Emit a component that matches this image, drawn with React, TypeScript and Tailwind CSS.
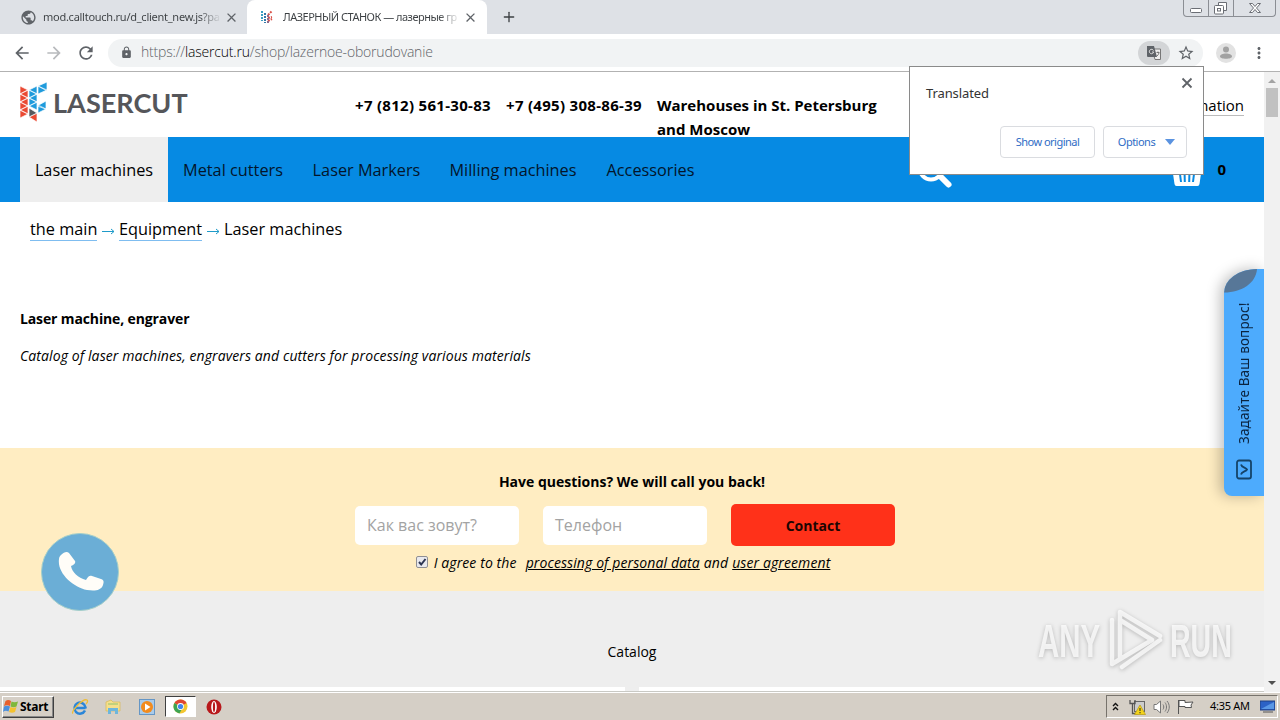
import React from 'react';
import clsx from 'clsx';
import { Plus } from 'lucide-react';
import { MdArrowBack, MdArrowForward, MdClose, MdLock, MdMoreVert, MdPublic, MdRefresh, MdStarBorder } from 'react-icons/md';

const uiFont = "font-['Noto_Sans','Open_Sans',sans-serif]";

const navItems = [
  { label: 'Laser machines', width: 'w-[148px]', active: true },
  { label: 'Metal cutters', width: 'w-[130px]' },
  { label: 'Laser Markers', width: 'w-[137px]' },
  { label: 'Milling machines', width: 'w-[156px]' },
  { label: 'Accessories', width: 'w-[119px]' },
];

function Favicon() {
  return (
    <svg width="14" height="16" viewBox="0 0 14 16" fill="none" strokeWidth="2" strokeDasharray="2 1">
      <path d="M2 2v10" stroke="#3c9fc4" />
      <path d="M5 4v10" stroke="#3579a8" />
      <path d="M8 6l4-4M8 9l4-1M8 12l4-2" stroke="#d9534a" />
      <path d="M8 6v9" stroke="#8c6b8e" />
    </svg>
  );
}

function TabStrip() {
  return (
    <div className="flex h-[34px] bg-[#dee1e6] text-[11px] text-[#3c4043]">
      <div className="flex w-[247px] items-center pl-5">
        <MdPublic size={17} className="shrink-0 text-[#5f6368]" />
        <span className="ml-[6px] w-[178px] bg-linear-to-r from-[#3c4043] from-88% to-transparent bg-clip-text tracking-[-0.26px] whitespace-nowrap text-transparent">
          mod.calltouch.ru/d_client_new.js?pa
        </span>
        <MdClose size={15} className="ml-[3px] shrink-0 text-[#5f6368]" />
      </div>
      <div className="flex w-[240px] items-center rounded-t-lg bg-white pl-[13px]">
        <Favicon />
        <span className="ml-[9px] w-[177px] bg-linear-to-r from-[#3c4043] from-88% to-transparent bg-clip-text tracking-[-0.5px] whitespace-nowrap text-transparent">
          ЛАЗЕРНЫЙ СТАНОК — лазерные гр
        </span>
        <MdClose size={15} className="ml-[3px] shrink-0 text-[#5f6368]" />
      </div>
      <Plus size={16} className="mt-[9px] ml-[14px] text-[#3c4043]" />
      <div className="mr-1 ml-auto flex h-[17px] w-[93px] rounded-b-sm border border-t-0 border-[#8b8e94] text-[#6b6e75]">
        <svg width="91" height="16" viewBox="0 0 91 16" fill="none" stroke="currentColor">
          <path d="M24.5 0v16M49.5 0v16" stroke="#8b8e94" />
          <rect x="6.5" y="8.5" width="11" height="4" rx="1" fill="#fff" />
          <path d="M34.5 5.5v-3h8v8h-3" fill="#fff" />
          <rect x="30.5" y="5.5" width="9" height="8.5" rx="1" fill="#fff" />
          <rect x="33.5" y="8.5" width="3" height="2.5" />
          <path d="M65.5 3.5h3l2.500 3 2.500-3h3l-4 4.500 4 4.500h-3l-2.500-3-2.500 3h-3l4-4.500z" fill="#fff" />
        </svg>
      </div>
    </div>
  );
}

function Toolbar() {
  return (
    <div className="flex h-[38px] items-center border-b border-[#b2b2b2] bg-white">
      <MdArrowBack size={20} className="ml-3 text-[#5f6368]" />
      <MdArrowForward size={20} className="ml-3 text-[#b8babd]" />
      <MdRefresh size={20} className="ml-3 text-[#5f6368]" />
      <div className="ml-3 flex h-7 w-[1095px] items-center rounded-full bg-[#f1f3f4] pl-3">
        <MdLock size={13} className="text-[#5f6368]" />
        <span className="mb-[2px] ml-[8px] font-['Open_Sans',sans-serif] text-[14px] font-light tracking-[-0.18px] whitespace-nowrap text-[#5f6368]">
          https://<span className="text-black">lasercut.ru</span>/shop/lazernoe-oborudovanie
        </span>
        <div className="ml-auto flex h-6 w-8 items-center justify-center rounded-full bg-[#d3d5d7]">
          <svg width="16" height="16" viewBox="0 0 16 16">
            <path d="M6 4h8.500v10.500H9z" fill="#eee" stroke="#777" />
            <path d="M1 1h7l3 11H2a1 1 0 0 1-1-1z" fill="#5f6368" />
            <path d="M7.500 5.500A2.200 2.200 0 1 0 7.700 7H6" fill="none" stroke="#ddd" />
            <path d="M10.500 7.500h3M12 6.500v1M13 8c-.5 1.500-1 2-2 3" fill="none" stroke="#777" />
          </svg>
        </div>
        <MdStarBorder size={18} className="mr-2 ml-[7px] text-[#5f6368]" />
      </div>
      <svg width="20" height="20" viewBox="0 0 20 20" className="ml-[13px]">
        <circle cx="10" cy="10" r="10" fill="#e2e2e2" />
        <circle cx="10" cy="6.500" r="3" fill="#a2a2a2" />
        <path d="M4 13.500c0-4 12-4 12 0 0 3-12 3-12 0z" fill="#a2a2a2" />
      </svg>
      <MdMoreVert size={18} className="ml-[14px] text-[#5f6368]" />
    </div>
  );
}

function TranslateBubble() {
  return (
    <div className={clsx('absolute top-[66px] left-[909px] h-[109px] w-[295px] border border-[#8a8a8a] bg-white', uiFont)}>
      <div className="flex items-start justify-between pt-2 pr-2 pl-4">
        <span className="mt-[8px] text-[13px] leading-5 tracking-[-0.1px] text-[#333]">Translated</span>
        <svg width="16" height="16" viewBox="0 0 16 16" fill="none" stroke="#5f6368" strokeWidth="1.800">
          <path d="M3.500 3.500l9 9M12.500 3.500l-9 9" />
        </svg>
      </div>
      <div className="mt-[23px] flex justify-end gap-2 pr-4 text-[11px] text-[#2f6cc5]">
        <button className="h-8 w-[95px] rounded border border-[#dadce0] tracking-[-0.5px]">Show original</button>
        <button className="flex h-8 w-[84px] items-center justify-center gap-[10px] rounded border border-[#dadce0] pl-[3px] tracking-[-0.5px]">
          Options
          <svg width="10" height="6" viewBox="0 0 10 6">
            <path d="M0 0h10L5 6z" fill="#5a93e0" />
          </svg>
        </button>
      </div>
    </div>
  );
}

function Logo() {
  return (
    <div className="flex items-center">
      <svg width="29" height="40" viewBox="0 0 29 40" stroke="#fff" strokeWidth=".7">
        <path
          d="M1 4L9 8L1 12zM9 8V16L1 12zM1 12L9 16L1 20zM9 16V24L1 20zM1 20L9 24L1 28zM9 24V32L1 28zM1 28L9 32L1 36zM10 35L18 31V40z"
          fill="#ea4a33"
        />
        <path
          d="M10 8L18 4V12zM10 8L18 12L10 16zM18 12V20L10 16zM10 16L18 20L10 24zM18 20V28L10 24zM19 4L28 0V9zM19 4L28 8L19 12zM18 24L27 19V27zM19 23L27 27L19 31z"
          fill="#1f9bdc"
        />
        <path d="M10 26L18 31L10 35z" fill="#56595e" />
      </svg>
      <span className="mt-[2px] ml-[5px] font-[Lato,sans-serif] text-[27px] leading-10 font-bold tracking-[0.05px] text-[#55565a]">LASERCUT</span>
    </div>
  );
}

function Header() {
  return (
    <header className="flex h-[65px] shrink-0 bg-white pl-[19px]">
      <div className="w-[336px] pt-[9px]">
        <Logo />
      </div>
      <div className="flex gap-[15px] pt-[21px] text-[15px] leading-6 font-bold whitespace-nowrap">
        <span className="w-[136px] tracking-[0.3px]">+7 (812) 561-30-83</span>
        <span className="w-[136px] tracking-[0.3px]">+7 (495) 308-86-39</span>
        <span className="w-[225px] whitespace-normal">Warehouses in St. Petersburg and Moscow</span>
      </div>
      <div className="ml-auto pt-[24px] pr-[20px] text-[15px]">
        <span className="block border-b border-[#bbb] pb-px leading-[18px]">Information</span>
      </div>
    </header>
  );
}

function Nav() {
  return (
    <nav className="flex h-[65px] shrink-0 bg-[#068ae3] pl-5 text-[16.3px]">
      {navItems.map((item) => (
        <a
          key={item.label}
          className={clsx('flex h-full items-center justify-center pt-[2px] whitespace-nowrap', item.width, item.active ? 'bg-[#eee] text-black' : 'text-[#03152b]')}
        >
          {item.label}
        </a>
      ))}
      <div className="mr-[38px] ml-auto flex items-center">
        <svg width="40" height="40" viewBox="0 0 40 40" fill="none" stroke="#fff" className="mr-[218px]">
          <circle cx="18" cy="18" r="11.500" strokeWidth="4" />
          <path d="M27.500 26.500l8 8" strokeWidth="6" strokeLinecap="round" />
        </svg>
        <svg width="32" height="34" viewBox="0 0 32 34">
          <path d="M1 14h30l-2.500 17q-.3 2-2 2h-21q-1.700 0-2-2z" fill="#fff" />
          <path d="M8.500 17l1.500 12M13.500 17l.3 12M18.500 17l-.3 12M23.500 17L22 29" stroke="#068ae3" strokeWidth="2" />
        </svg>
        <span className="ml-[14px] text-[15px] font-bold">0</span>
      </div>
    </nav>
  );
}

function Arrow() {
  return (
    <svg width="14" height="8" viewBox="0 0 14 8" fill="none" stroke="#1f9bc9" className="mx-[4px] mt-px">
      <path d="M1 4.500h12M10 2l3 2.500L10 7" />
    </svg>
  );
}

function Breadcrumbs() {
  return (
    <div className="flex items-center pt-[17px] pl-[30px] text-[16.3px] whitespace-nowrap">
      <a className="w-[67px] border-b border-[#7fbdf0] pb-px leading-[20px]">the main</a>
      <Arrow />
      <a className="w-[83px] border-b border-[#7fbdf0] pb-px leading-[20px]">Equipment</a>
      <Arrow />
      <span className="mb-[2px] leading-[20px]">Laser machines</span>
    </div>
  );
}

function CallbackForm() {
  return (
    <section className="flex h-[143px] shrink-0 flex-col items-center bg-[#ffedc2]">
      <h3 className="mt-[24px] text-[14px] leading-5 font-bold">Have questions? We will call you back!</h3>
      <div className="mt-[12px] mr-[14px] flex items-center gap-6 text-[16px] text-[#a3a3a3]">
        <div className="mt-px h-[39px] w-[164px] rounded-[5px] bg-white pl-3 leading-[38px]">Как вас зовут?</div>
        <div className="mt-px h-[39px] w-[164px] rounded-[5px] bg-white pl-3 leading-[38px]">Телефон</div>
        <button className="h-[42px] w-[164px] rounded-[5px] bg-[#ff3119] text-[14px] font-bold text-[#1c0502]">Contact</button>
      </div>
      <div className="mt-[6px] mr-[18px] flex h-5 items-center text-[14px] tracking-[0.1px] whitespace-nowrap italic">
        <svg width="12" height="12" viewBox="0 0 12 12" className="mr-[6px]">
          <rect x=".5" y=".5" width="11" height="11" rx="1.500" fill="#e9e9ee" stroke="#8f8f94" />
          <path d="M3 6l2.200 2.500L9.500 3" fill="none" stroke="#2d3553" strokeWidth="2" />
        </svg>
        <span className="w-[84px]">I agree to the</span>
        <a className="ml-2 underline">processing of personal data</a>
        <span className="mx-1">and</span>
        <a className="underline">user agreement</a>
      </div>
    </section>
  );
}

function ScrollBar() {
  return (
    <div className="relative z-10 flex w-4 shrink-0 flex-col items-center bg-[#f1f1f1]">
      <svg width="10" height="16" viewBox="0 0 10 16">
        <path d="M1 11l4-4 4 4z" fill="#a3a3a3" />
      </svg>
      <div className="h-[29px] w-3 bg-[#c1c1c1]" />
      <svg width="10" height="16" viewBox="0 0 10 16" className="mt-auto">
        <path d="M1 5l4 4 4-4z" fill="#505050" />
      </svg>
    </div>
  );
}

function QuestionTab() {
  return (
    <div className="absolute top-[269px] left-[1224px] flex h-[227px] w-10 flex-col items-center overflow-hidden rounded-tl-[33px_24px] rounded-bl-lg bg-[#4dabfd] shadow-[-4px_0_14px_rgba(0,0,0,0.25)]">
      <svg width="40" height="24" viewBox="0 0 40 24" className="shrink-0">
        <path d="M0 23.500C0 8 14 0 33 0 32 14 18 23.500 0 23.500z" fill="#577798" />
      </svg>
      <span className="mt-[8px] h-[143px] rotate-180 text-[13.5px] leading-5 tracking-[0.15px] whitespace-nowrap text-[#0b2440] [writing-mode:vertical-rl]">
        Задайте Ваш вопрос!
      </span>
      <svg width="18" height="21" viewBox="0 0 18 21" fill="none" stroke="#154368" strokeWidth="1.800" className="mt-[15px]">
        <rect x="2" y="1.500" width="14" height="18" rx="2" />
        <path d="M6 5.500c.5 3 5 3 6 5-1 2-5.500 2-6 5" />
      </svg>
    </div>
  );
}

function PhoneBubble() {
  return (
    <div className="absolute top-[533px] left-[41px] flex h-[78px] w-[78px] items-center justify-center rounded-full border border-[#a5cfc9] bg-[#6baed6]">
      <svg width="46" height="42" viewBox="0 0 46 42" className="ml-[2px]">
        <path d="M3 4C6 1 9 0 11 2l6 8c1 2-1 4-4 5 1 6 7 12 15 14 2-4 4-5 6-4l9 3c3 1 3 3 2 6-2 6-9 6-16 5C15 36-1 22 1 8c0-2 1-3 2-4z" fill="#fffdf8" />
      </svg>
    </div>
  );
}

function Watermark() {
  return (
    <div className="absolute top-[607px] left-[1038px] flex items-center text-[46px] leading-[64px] text-white/75 drop-shadow-[0_1px_2px_rgba(0,0,0,0.3)]">
      <span className="w-[64px]">
        <span className="inline-block origin-left scale-x-[0.64] font-['Liberation_Sans',sans-serif] font-bold">ANY</span>
      </span>
      <svg width="56" height="64" viewBox="0 0 56 64" fill="none" stroke="currentColor" strokeWidth="4.500" className="ml-[6px] shrink-0">
        <path d="M12 50V4l40 24M4 12v44l40-24L12 12M52 32L14 59" strokeLinejoin="round" strokeLinecap="round" />
      </svg>
      <span className="ml-[6px] w-[66px]">
        <span className="inline-block origin-left scale-x-[0.62] font-['Liberation_Sans',sans-serif] font-bold">RUN</span>
      </span>
    </div>
  );
}

function Taskbar() {
  return (
    <div className="flex h-7 items-center border-t border-white bg-[#d5cfc6] shadow-[0_-1px_0_#c9c9c4]">
      <button className="ml-[2px] flex h-[22px] w-[52px] items-center border border-t-white border-r-[#404040] border-b-[#404040] border-l-white shadow-[inset_-1px_-1px_0_#888]">
        <svg width="16" height="15" viewBox="0 0 16 15" className="shrink-0">
          <path d="M2.500 2c2-1.500 4-1 5.500 0L7 7C5 6 3 6 1 7z" fill="#e8602c" />
          <path d="M8.500 2.500c2 1 4 1 6.500 0l-1.500 5c-2 1-4 1-6 0z" fill="#7fb83c" />
          <path d="M1 7.500c2-1 4-1 6 0l-1.500 5c-2-1-4-1-5.500.500z" fill="#4c8fdc" />
          <path d="M7.500 8c2 1 4 1 6 0l-1.500 5c-2 1-4 1-6 0z" fill="#f4c230" />
        </svg>
        <span className="ml-px text-[12px] font-bold tracking-[-0.25px]">Start</span>
      </button>
      <svg width="18" height="18" viewBox="0 0 18 18" fill="none" className="ml-[17px]">
        <path d="M14.500 10H5M14 12.500a5.500 5.500 0 1 1 .5-3v1" stroke="#2b86d8" strokeWidth="2.500" />
        <path d="M2 15.500C-1 14 12 0 16 2c1 1 0 3-1 4" stroke="#efbd36" strokeWidth="1.300" />
      </svg>
      <svg width="16" height="16" viewBox="0 0 16 16" className="ml-[16px]">
        <path d="M1 3l5-2 2 2h7v9H1z" fill="#f5df8b" stroke="#d9b856" strokeWidth=".7" />
        <path d="M3 15V9h10v6h-3v-3H6v3z" fill="#6eb6dc" />
        <path d="M3 5h10" stroke="#8fc36d" />
      </svg>
      <svg width="16" height="16" viewBox="0 0 16 16" className="ml-[18px]">
        <rect x=".5" y=".5" width="15" height="15" fill="#a9cbea" stroke="#6596c5" />
        <circle cx="8" cy="8" r="6" fill="#f28b1e" />
        <path d="M6 4.500L11.500 8 6 11.500z" fill="#fff" />
      </svg>
      <div className="ml-[10px] flex h-[21px] w-[31px] items-center justify-center border border-t-[#404040] border-r-white border-b-white border-l-[#404040] bg-white">
        <svg width="15" height="15" viewBox="0 0 15 15">
          <circle cx="7.500" cy="7.500" r="7" fill="#f3c631" />
          <path d="M7.500 7.500L1.400 4a7 7 0 0 1 12.200 0z" fill="#df4634" />
          <path d="M1.400 4a7 7 0 0 0 5 10.400L9.500 9z" fill="#3da453" />
          <circle cx="7.500" cy="7.500" r="3.400" fill="#fff" />
          <circle cx="7.500" cy="7.500" r="2.600" fill="#4285ee" />
        </svg>
      </div>
      <svg width="16" height="16" viewBox="0 0 16 16" className="ml-[10px]">
        <circle cx="8" cy="8" r="7.500" fill="#b8181b" />
        <ellipse cx="8" cy="8" rx="2.800" ry="6" fill="#fff" />
        <ellipse cx="8" cy="8" rx="1.100" ry="5" fill="#b8181b" />
      </svg>
      <div className="mr-[2px] ml-auto flex h-[23px] w-[172px] items-center border border-t-[#77736c] border-r-white border-b-white border-l-[#77736c]">
        <svg width="7" height="9" viewBox="0 0 7 9" fill="none" stroke="#111" strokeWidth="1.400" className="ml-[5px]">
          <path d="M1 4l2.500-2.500L6 4M1 8l2.500-2.500L6 8" />
        </svg>
        <svg width="17" height="16" viewBox="0 0 17 16" className="ml-[10px]">
          <rect x="5.500" y="2.500" width="10" height="10" fill="#ccc" stroke="#666" />
          <path d="M1 1v3.500h5V1M3.500 4.500v10h5" fill="none" stroke="#555" strokeWidth="1.300" />
          <path d="M11 6l5.500 9.500h-11z" fill="#f3d31a" stroke="#b79a10" strokeWidth=".7" />
          <path d="M11 9v3M11 13v1.300" stroke="#222" />
        </svg>
        <svg width="17" height="14" viewBox="0 0 17 14" fill="none" stroke="#777" className="ml-[7px]">
          <path d="M1 4.500h2.500L7.500 1v12l-4-3.500H1z" fill="#fff" />
          <path d="M10 4.500c1 1.500 1 3.500 0 5M12 2.500c2 2.500 2 6.500 0 9M14 1c3 3.500 3 8.500 0 12" />
        </svg>
        <svg width="17" height="15" viewBox="0 0 17 15" fill="#fff" stroke="#555" className="ml-[7px]">
          <path d="M1.500 1v14M2 1.500h6v2l8-.5-2 3 .5 2.500H8v-1H2z" />
        </svg>
        <span className="ml-[16px] w-[41px] font-['Noto_Sans',sans-serif] text-[11px] tracking-[-0.3px] whitespace-nowrap">4:35 AM</span>
        <svg width="15" height="13" viewBox="0 0 15 13" className="ml-[9px]">
          <path d="M0 1h15v9H0z" fill="#2c62c6" stroke="#1f3f80" />
          <path d="M1 9L14 2v7z" fill="#5a98e6" />
          <path d="M3 12h10" stroke="#555" />
        </svg>
      </div>
    </div>
  );
}

export default function App() {
  return (
    <div className={clsx('relative flex h-[720px] w-[1280px] flex-col overflow-hidden bg-white text-black', uiFont)}>
      <TabStrip />
      <Toolbar />
      <div className="flex h-[620px] shrink-0">
        <main className="flex w-[1264px] flex-col font-['Open_Sans',sans-serif]">
          <Header />
          <Nav />
          <div className="h-[246px] shrink-0">
            <Breadcrumbs />
            <h1 className="mt-[68px] pl-5 text-[14px] leading-5 font-bold tracking-[-0.13px]">Laser machine, engraver</h1>
            <p className="mt-[17px] pl-5 text-[14px] leading-5 tracking-[0.1px] italic">
              Catalog of laser machines, engravers and cutters for processing various materials
            </p>
          </div>
          <CallbackForm />
          <section className="flex h-24 shrink-0 justify-center bg-[#eee] pt-[50px] text-[14px]">Catalog</section>
          <div className="flex h-[5px] justify-center">
            <div className="h-full w-[14px] bg-[#eee]" />
          </div>
        </main>
        <ScrollBar />
      </div>
      <Taskbar />
      <QuestionTab />
      <PhoneBubble />
      <Watermark />
      <TranslateBubble />
    </div>
  );
}
